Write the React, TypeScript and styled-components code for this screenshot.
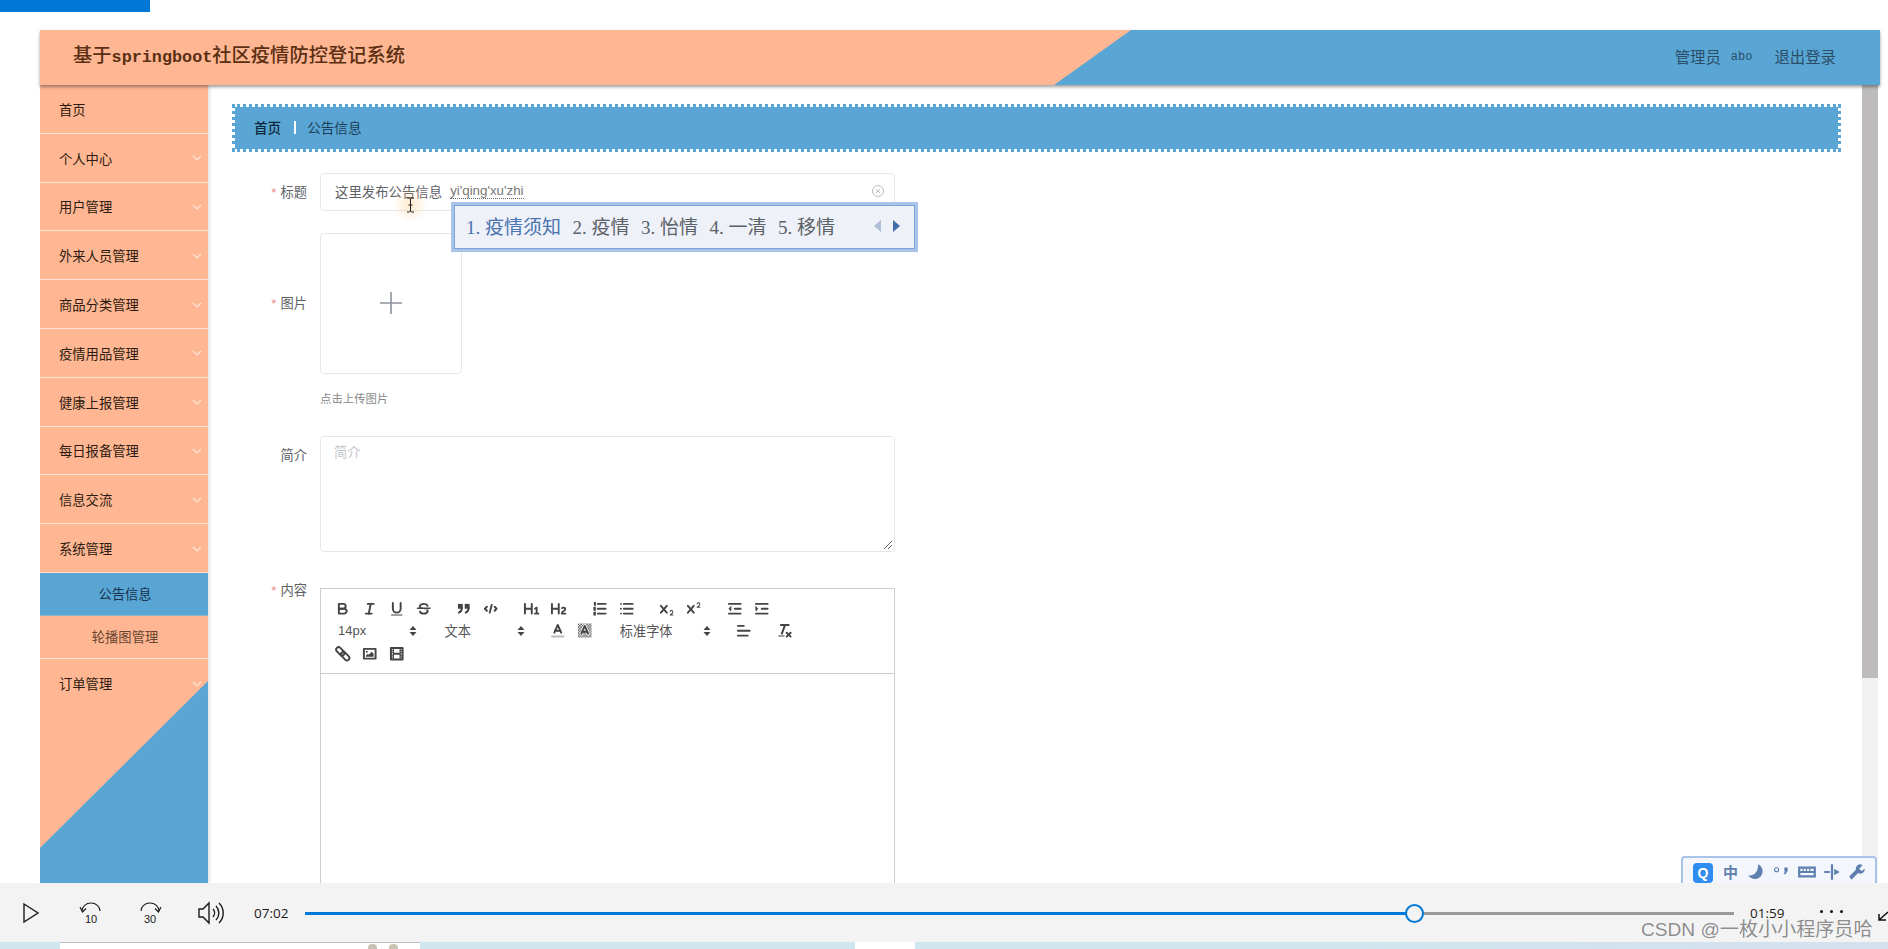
import React from "react";
import styled, { createGlobalStyle } from "styled-components";

const SANS = `"Noto Sans CJK SC", "Liberation Sans", sans-serif`;
const PEACH = "#ffb693";
const BLUE = "#59a6d5";

const Global = createGlobalStyle`
  html, body { margin: 0; padding: 0; background: #fff; overflow: hidden; }
  body { font-family: ${SANS}; }
  * { box-sizing: border-box; }
`;

const Screen = styled.div`
  width: 1888px; height: 949px; display: flex; flex-direction: column; overflow: hidden; background: #fff;
`;
const Viewport = styled.div`
  position: relative; height: 883px; overflow: hidden; flex: none;
`;
const TopStrip = styled.div`
  width: 150px; height: 12px; background: #0078d7;
`;
const Frame = styled.div`
  margin: 18px 0 0 40px; width: 1840px; height: 853px; display: flex; flex-direction: column;
`;
const Header = styled.header`
  position: relative; z-index: 2; flex: none; height: 55px; background: ${BLUE};
  box-shadow: 0 2px 3px rgba(40,40,40,.45);
  display: flex; align-items: center; justify-content: space-between; padding: 0 44px 3px 33px;
  &::before {
    content: ""; position: absolute; inset: 0; background: ${PEACH};
    clip-path: polygon(0 0, 1091px 0, 1014px 100%, 0 100%);
  }
`;
const Title = styled.h1`
  position: relative; margin: 0; font-size: 19.3px; font-weight: 500; color: #5b2f12; line-height: 52px; white-space: nowrap;
`;
const TitleLatin = styled.span`
  font-family: "Liberation Mono", monospace; font-size: 16.8px; font-weight: 700;
`;
const UserBox = styled.div`
  position: relative; display: flex; align-items: center; color: #2b4e68; font-size: 15.4px; line-height: 20px;
`;
const UserName = styled.span`
  font-family: "Liberation Mono", monospace; font-size: 12px; margin: 2px 22px 0 10px;
`;
const Body = styled.div`
  flex: 1; display: flex; min-height: 0;
`;
const Side = styled.nav`
  position: relative; flex: none; width: 168px; background: ${BLUE}; box-shadow: 2px 0 3px rgba(0,0,0,.1);
  &::before {
    content: ""; position: absolute; inset: 0; background: ${PEACH};
    clip-path: polygon(0 0, 100% 0, 100% 596px, 0 763px);
  }
`;
const MenuItem = styled.div<{ $last?: boolean }>`
  position: relative; height: 48.8px; padding: 1px 0 0 19px; display: flex; align-items: center; justify-content: space-between;
  font-size: 13.3px; color: #2e1c10;
  border-bottom: ${p => (p.$last ? "none" : "1.5px solid #ffe3d4")};
`;
const Chevron = styled.svg`
  width: 10px; height: 6px; margin-right: 6px; fill: none; stroke: #ffe7da; stroke-width: 1.2;
`;
const SubItem = styled.div<{ $active?: boolean }>`
  position: relative; height: 43px; padding-left: 2px; display: flex; align-items: center; justify-content: center; font-size: 13.3px;
  background: ${p => (p.$active ? BLUE : PEACH)};
  color: ${p => (p.$active ? "#16324d" : "#6a4630")};
  border-bottom: ${p => (p.$active ? "1px solid #8fb3c9" : "1.5px solid #ffe3d4")};
`;
const Main = styled.main`
  flex: 1; min-width: 0; display: flex;
`;
const Content = styled.div`
  flex: 1; min-width: 0; padding: 19px 21px 0 24px;
`;
const ScrollTrack = styled.div`
  flex: none; width: 16px; margin-right: 2px; background: #f1f1f1;
`;
const ScrollThumb = styled.div`
  height: 593px; background: #bdbbbb;
`;
const Crumbs = styled.div`
  height: 48px; border: 3px dotted ${BLUE}; background: ${BLUE}; background-clip: padding-box;
  display: flex; align-items: center; padding: 0 0 2px 19px; font-size: 13.6px; margin-bottom: 21px;
`;
const CrumbHome = styled.span`
  color: #10283c; font-weight: 500;
`;
const CrumbSep = styled.span`
  width: 2px; height: 13px; background: #fff; margin: 0 11px 0 13px;
`;
const CrumbNow = styled.span`
  color: #1d3d57;
`;
const FormRow = styled.div<{ $gap: number; $center?: boolean }>`
  display: flex; align-items: ${p => (p.$center ? "center" : "flex-start")}; margin-bottom: ${p => p.$gap}px;
`;
const Label = styled.label<{ $tight?: boolean }>`
  flex: none; width: 75px; margin-right: 13px; text-align: right; font-size: 13.3px; color: #606266;
  line-height: ${p => (p.$tight ? "20px" : "38px")};
  margin-top: ${p => (p.$tight ? "-8px" : "0")};
`;
const Star = styled.span`
  color: #f08a8a; font-family: "Liberation Sans", sans-serif; margin-right: 4px;
`;
const InputBox = styled.div`
  width: 575px; height: 38px; border: 1px solid #e4e7ed; border-radius: 4px; display: flex; align-items: center; padding: 0 9px 2px 14px;
  font-size: 13.4px; color: #606266;
`;
const Composition = styled.span`
  margin-left: 8px; font-family: "Liberation Sans", sans-serif; font-size: 13.3px; color: #777;
  border-bottom: 1px dotted #666; line-height: 15px;
`;
const ClearIcon = styled.svg`
  width: 14px; height: 14px; margin-left: auto; fill: none; stroke: #b9bcc2; stroke-width: 1;
`;
const Upload = styled.div`
  width: 142px; height: 141px; border: 1px solid #e4e7ed; border-radius: 4px; display: flex; align-items: center; justify-content: center; padding-bottom: 2px;
`;
const PlusIcon = styled.svg`
  width: 24px; height: 24px; stroke: #8c939d; stroke-width: 1.6; fill: none;
`;
const Tip = styled.div`
  margin: 16px 0 30px 88px; height: 16px; line-height: 16px; font-size: 11.4px; color: #888;
`;
const TextArea = styled.div`
  position: relative; width: 575px; height: 116px; border: 1px solid #e4e7ed; border-radius: 4px; padding: 5px 13px;
  font-size: 13.3px; color: #c4c6cc; line-height: 20px;
`;
const Resizer = styled.svg`
  position: absolute; right: 1px; bottom: 1px; width: 10px; height: 10px; stroke: #666; stroke-width: 1; fill: none;
`;
const Editor = styled.div`
  width: 575px; border: 1px solid #ccc;
`;
const Toolbar = styled.div`
  padding: 8px 8px 8px; border-bottom: 1px solid #ccc;
`;
const ToolRow = styled.div`
  display: flex; height: 22.5px; align-items: center;
`;
const Group = styled.div`
  display: flex; align-items: center; margin-right: 13.6px;
`;
const Btn = styled.span`
  width: 27px; height: 22.5px; display: flex; align-items: center; justify-content: center;
`;
const Ico = styled.svg`
  width: 17.5px; height: 17.5px; fill: none; stroke: #444; stroke-width: 2; stroke-linecap: round; stroke-linejoin: round;
  .f { fill: #444; stroke: none; }
`;
const Picker = styled.span<{ $w: number; $latin?: boolean }>`
  width: ${p => p.$w}px; margin-right: 13.6px; height: 22.5px; display: flex; align-items: center; justify-content: space-between;
  padding: 0 5px 0 ${p => (p.$latin ? 9 : 8)}px; color: #555; line-height: 1; font-size: ${p => (p.$latin ? 13 : 13.2)}px;
  font-family: ${p => (p.$latin ? `"Liberation Sans", sans-serif` : SANS)};
`;
const PickerArrows = styled.svg`
  width: 10px; height: 12px; fill: #444;
`;
const EditArea = styled.div`
  height: 300px;
`;
const Candidates = styled.div`
  position: absolute; left: 451px; top: 202px; width: 467px; height: 50px; background: #eef1f8;
  border: 4px solid #a9c4e8; outline: 1px solid #7ea3d6; outline-offset: -4px;
  display: flex; align-items: center; padding: 0 0 3px 11px; font-family: "Liberation Serif", "Noto Sans CJK SC", serif;
  font-size: 19px; color: #5b6168;
`;
const Candidate = styled.span<{ $on?: boolean }>`
  margin-right: 11.5px; color: ${p => (p.$on ? "#4a73b0" : "#5b6168")};
`;
const PageArrows = styled.svg`
  position: absolute; right: 13px; top: 12px; width: 28px; height: 16px;
`;
const Pointer = styled.div`
  position: absolute; left: 392px; top: 187px; width: 36px; height: 36px; border-radius: 50%;
  background: radial-gradient(circle, rgba(255,200,130,.4), rgba(255,220,170,0) 70%);
  display: flex; align-items: center; justify-content: center;
`;
const PointerIcon = styled.svg`
  width: 9px; height: 16px; stroke: #222; stroke-width: 1; fill: none;
`;
const ImeBar = styled.div`
  position: absolute; left: 1681px; top: 856px; width: 196px; height: 40px; background: #f3f6fc;
  border: 2px solid #a9c4e8; border-radius: 4px 4px 0 0; display: flex; align-items: flex-start; padding: 4px 0 0 10px; gap: 4px;
  color: #5f80ae;
`;
const ImeLogo = styled.span`
  width: 20px; height: 20px; margin-top: 1px; border-radius: 4px; background: #2f8df0; color: #fff; font: 700 14px/20px "Liberation Sans", sans-serif; text-align: center; margin-right: 3px;
`;
const ImeCell = styled.span`
  width: 21px; height: 20px; font-size: 15px; line-height: 20px; font-weight: 700; text-align: center; margin-right: 0.4px; display: flex; align-items: center; justify-content: center;
`;
const ImeIcon = styled.svg`
  flex: none; width: 20px; height: 18px; fill: #5f80ae;
`;
const Player = styled.div`
  position: relative; flex: none; height: 59px; background: #f3f3f3; display: flex; align-items: center; padding-left: 22px;
`;
const PlayIcon = styled.svg`
  width: 18px; height: 22px; fill: none; stroke: #1a1a1a; stroke-width: 1.4; margin-right: 39px;
`;
const SkipIcon = styled.svg`
  width: 24px; height: 28px; margin-right: 35px; fill: none; stroke: #1a1a1a; stroke-width: 1.1;
  text { font: 11px "Liberation Sans", sans-serif; fill: #1a1a1a; stroke: none; text-anchor: middle; }
`;
const SpeakerIcon = styled.svg`
  width: 28px; height: 26px; margin-right: 29px; fill: none; stroke: #1a1a1a; stroke-width: 1.4;
`;
const Time = styled.span`
  flex: none; width: 51px; font: 13.5px "Open Sans", "Liberation Sans", sans-serif; color: #1a1a1a;
`;
const Track = styled.div`
  position: relative; flex: none; width: 1429px; height: 3px; margin-top: 2px; background: #9a9a9a;
`;
const Played = styled.div`
  height: 3px; background: #0078d7;
`;
const Thumb = styled.span`
  position: absolute; top: -8px; width: 19px; height: 19px; margin-left: -9.5px; border-radius: 50%; background: #f3f3f3; border: 2.5px solid #0078d7;
`;
const EndTime = styled(Time)`
  width: 60px; margin-left: 16px;
`;
const More = styled.span`
  flex: none; margin-left: 10px; display: flex; gap: 7px; margin-top: -3px;
`;
const Dot = styled.i`
  width: 3px; height: 3px; border-radius: 50%; background: #111;
`;
const Corner = styled.svg`
  position: absolute; right: 0; top: 26px; width: 10px; height: 12px; stroke: #111; stroke-width: 1.5; fill: none;
`;
const Watermark = styled.div`
  position: absolute; left: 1641px; top: 36px; font-size: 19.1px; line-height: 22px; color: rgba(110,110,110,.8); white-space: nowrap;
  font-family: "Liberation Sans", "Noto Sans CJK SC", sans-serif; text-shadow: 0 0 1px #fff;
`;
const Desktop = styled.div`
  flex: none; height: 7px; background: linear-gradient(90deg, #cfe6ef 0, #cfe6ef 70%, #d5e0ee 100%); display: flex;
`;
const DeskWindow = styled.div<{ $left: number; $width: number }>`
  margin-left: ${p => p.$left}px; width: ${p => p.$width}px; background: #fff; border-top: ${p => (p.$left < 100 ? "1px solid #bbb" : "none")};
  display: flex; justify-content: flex-end; gap: 12px; padding-right: 22px;
`;
const DeskIcon = styled.i`
  width: 9px; height: 5px; margin-top: 1px; border-radius: 4px 4px 0 0; background: #c8c4b4;
`;

const Chev = () => (
  <Chevron viewBox="0 0 10 6"><polyline points="1,1 5,5 9,1" /></Chevron>
);

const menu = ["个人中心", "用户管理", "外来人员管理", "商品分类管理", "疫情用品管理", "健康上报管理", "每日报备管理", "信息交流", "系统管理"];

const I: Record<string, React.ReactNode> = {
  bold: <><path d="M5,4H9.5A2.5,2.5,0,0,1,12,6.5v0A2.5,2.5,0,0,1,9.5,9H5V4Z" /><path d="M5,9h5.5A2.5,2.5,0,0,1,13,11.5v0A2.5,2.5,0,0,1,10.5,14H5V9Z" /></>,
  italic: <><line x1="7" x2="13" y1="4" y2="4" /><line x1="5" x2="11" y1="14" y2="14" /><line x1="8" x2="10" y1="14" y2="4" /></>,
  underline: <><path d="M5,3V9a4,4,0,0,0,4,4H9a4,4,0,0,0,4-4V3" /><rect className="f" x="3" y="15" width="12" height="1" rx=".5" /></>,
  strike: <><line x1="15.5" x2="2.5" y1="8.5" y2="8.5" strokeWidth="1.4" /><path className="f" d="M9.007,8C6.542,7.791,6,7.519,6,6.5,6,5.792,7.283,5,9,5c1.571,0,2.765.679,2.969,1.309a1,1,0,0,0,1.9-.617C13.356,4.106,11.354,3,9,3,6.2,3,4,4.538,4,6.5a3.2,3.2,0,0,0,.5,1.843Z" /><path className="f" d="M8.984,10C11.457,10.208,12,10.479,12,11.5c0,.708-1.283,1.5-3,1.5-1.571,0-2.765-.679-2.969-1.309a1,1,0,1,0-1.9.617C4.644,13.894,6.646,15,9,15c2.8,0,5-1.538,5-3.5a3.2,3.2,0,0,0-.5-1.843Z" /></>,
  quote: <><rect className="f" x="3" y="4" width="5" height="5" /><rect className="f" x="10" y="4" width="5" height="5" /><path d="M7,8c0,4-3,5-3,5" /><path d="M14,8c0,4-3,5-3,5" /></>,
  code: <><polyline points="5 7 3 9 5 11" /><polyline points="13 7 15 9 13 11" /><line x1="10" x2="8" y1="5" y2="13" /></>,
  h1: <path className="f" d="M10,4V14a1,1,0,0,1-2,0V10H3v4a1,1,0,0,1-2,0V4A1,1,0,0,1,3,4V8H8V4a1,1,0,0,1,2,0Zm6.06787,9.209H14.98975V7.59863a.54085.54085,0,0,0-.605-.60547h-.62744a1.01119,1.01119,0,0,0-.748.29688L11.645,8.56641a.5435.5435,0,0,0-.022.8584l.28613.30762a.53861.53861,0,0,0,.84717.0332l.09912-.08789a1.2137,1.2137,0,0,0,.2417-.35254h.02246s-.01123.30859-.01123.60547V13.209H12.041a.54085.54085,0,0,0-.605.60547v.43945a.54085.54085,0,0,0,.605.60547h4.02686a.54085.54085,0,0,0,.605-.60547v-.43945A.54085.54085,0,0,0,16.06787,13.209Z" />,
  h2: <path className="f" d="M16.73975,13.81445v.43945a.54085.54085,0,0,1-.605.60547H11.855a.58392.58392,0,0,1-.64893-.60547V14.0127c0-2.90527,3.39941-3.42187,3.39941-4.55469a.77675.77675,0,0,0-.84717-.78125,1.17684,1.17684,0,0,0-.83594.38477c-.2749.26367-.561.374-.85791.13184l-.4292-.34082c-.30811-.24219-.38525-.51758-.1543-.81445a2.97155,2.97155,0,0,1,2.45361-1.17676,2.45393,2.45393,0,0,1,2.68408,2.40918c0,2.45312-3.1792,2.92676-3.27832,3.93848h2.79443A.54085.54085,0,0,1,16.73975,13.81445ZM9,3A.99974.99974,0,0,0,8,4V8H3V4A1,1,0,0,0,1,4V14a1,1,0,0,0,2,0V10H8v4a1,1,0,0,0,2,0V4A.99974.99974,0,0,0,9,3Z" />,
  ol: <><line x1="7" x2="15" y1="4" y2="4" /><line x1="7" x2="15" y1="9" y2="9" /><line x1="7" x2="15" y1="14" y2="14" /><rect className="f" x="3" y="2" width="2" height="4" /><rect className="f" x="2.5" y="7" width="2.5" height="4" /><rect className="f" x="2.5" y="12" width="2.5" height="4" /></>,
  ul: <><line x1="6" x2="15" y1="4" y2="4" /><line x1="6" x2="15" y1="9" y2="9" /><line x1="6" x2="15" y1="14" y2="14" /><line x1="3" x2="3" y1="4" y2="4" /><line x1="3" x2="3" y1="9" y2="9" /><line x1="3" x2="3" y1="14" y2="14" /></>,
  sub: <><path className="f" d="M15.5,15H13.861a3.858,3.858,0,0,0,1.914-2.975,1.8,1.8,0,0,0-1.6-1.751A1.921,1.921,0,0,0,12.021,11.7a.50013.50013,0,1,0,.957.291h0a.914.914,0,0,1,1.053-.725.81.81,0,0,1,.744.762c0,1.076-1.16971,1.86982-1.93971,2.43082A1.45639,1.45639,0,0,0,12,15.5a.5.5,0,0,0,.5.5h3A.5.5,0,0,0,15.5,15Z" /><path className="f" d="M9.65,5.241a1,1,0,0,0-1.409.108L6,7.964,3.759,5.349A1,1,0,0,0,2.241,6.651L4.684,9.5,2.241,12.35A1,1,0,0,0,3.75,13.667L6,11.036,8.241,13.65a1,1,0,1,0,1.518-1.3L7.316,9.5,9.759,6.651A1,1,0,0,0,9.65,5.241Z" /></>,
  sup: <><path className="f" d="M15.5,7H13.861a4.015,4.015,0,0,0,1.914-2.975,1.8,1.8,0,0,0-1.6-1.751A1.922,1.922,0,0,0,12.021,3.7a.5.5,0,1,0,.957.291.917.917,0,0,1,1.053-.725.81.81,0,0,1,.744.762c0,1.077-1.164,1.925-1.934,2.486A1.423,1.423,0,0,0,12,7.5a.5.5,0,0,0,.5.5h3A.5.5,0,0,0,15.5,7Z" /><path className="f" d="M9.651,5.241a1,1,0,0,0-1.41.108L6,7.964,3.759,5.349a1,1,0,1,0-1.519,1.3L4.683,9.5,2.241,12.35a1,1,0,1,0,1.519,1.3L6,11.036,8.241,13.65a1,1,0,0,0,1.519-1.3L7.317,9.5,9.759,6.651A1,1,0,0,0,9.651,5.241Z" /></>,
  outdent: <><line x1="3" x2="15" y1="14" y2="14" /><line x1="3" x2="15" y1="4" y2="4" /><line x1="9" x2="15" y1="9" y2="9" /><polyline className="f" points="5 7 5 11 3 9 5 7" /><polyline points="5 7 5 11 3 9 5 7" strokeWidth="1" /></>,
  indent: <><line x1="3" x2="15" y1="14" y2="14" /><line x1="3" x2="15" y1="4" y2="4" /><line x1="9" x2="15" y1="9" y2="9" /><polyline className="f" points="3 7 3 11 5 9 3 7" /><polyline points="3 7 3 11 5 9 3 7" strokeWidth="1" /></>,
  color: <><line x1="3" x2="15" y1="15" y2="15" stroke="#bbb" /><polyline points="5.5 11 9 3 12.5 11" /><line x1="11.63" x2="6.38" y1="9" y2="9" /></>,
  bg: <><defs><pattern id="chk" width="3" height="3" patternUnits="userSpaceOnUse"><rect className="f" width="1.5" height="1.5" /><rect className="f" x="1.5" y="1.5" width="1.5" height="1.5" /></pattern></defs><rect x="2" y="1.5" width="14" height="14.5" fill="url(#chk)" stroke="none" /><polyline points="5.5 12 9 4 12.5 12" stroke="#fff" strokeWidth="3.4" /><polyline points="5.5 12 9 4 12.5 12" /><line x1="11.63" x2="6.38" y1="10" y2="10" /></>,
  align: <><line x1="3" x2="15" y1="9" y2="9" /><line x1="3" x2="13" y1="14" y2="14" /><line x1="3" x2="9" y1="4" y2="4" /></>,
  clean: <><line x1="5" x2="13" y1="3" y2="3" /><line x1="6" x2="9.35" y1="12" y2="3" /><line x1="11" x2="15" y1="11" y2="15" /><line x1="15" x2="11" y1="11" y2="15" /><rect className="f" x="2" y="14" width="7" height="1" rx=".5" /></>,
  link: <><rect x="1.5" y="4" width="10" height="5" rx="2.5" transform="rotate(45 6.5 6.5)" /><rect x="6.5" y="9" width="10" height="5" rx="2.5" transform="rotate(45 11.5 11.5)" /></>,
  image: <><rect x="3" y="4" width="12" height="10" /><circle className="f" cx="6" cy="7" r="1" /><polyline className="f" points="5 12 5 11 7 9 8 10 11 7 13 9 13 12 5 12" /></>,
  video: <><rect x="3" y="3" width="12" height="12" /><rect className="f" x="5" y="3" width="1" height="12" /><rect className="f" x="12" y="3" width="1" height="12" /><rect className="f" x="5" y="8" width="8" height="2" /><rect className="f" x="3" y="5" width="3" height="1" /><rect className="f" x="3" y="7" width="3" height="1" /><rect className="f" x="3" y="10" width="3" height="1" /><rect className="f" x="3" y="12" width="3" height="1" /><rect className="f" x="12" y="5" width="3" height="1" /><rect className="f" x="12" y="7" width="3" height="1" /><rect className="f" x="12" y="10" width="3" height="1" /><rect className="f" x="12" y="12" width="3" height="1" /></>,
};

const Tools = ({ names }: { names: string[] }) => (
  <Group>
    {names.map(n => (
      <Btn key={n}><Ico viewBox="0 0 18 18">{I[n]}</Ico></Btn>
    ))}
  </Group>
);

const Select = ({ text, w, latin }: { text: string; w: number; latin?: boolean }) => (
  <Picker $w={w} $latin={latin}>
    {text}
    <PickerArrows viewBox="0 0 10 12"><polygon points="5,1 8.5,5 1.5,5" /><polygon points="5,11 8.5,7 1.5,7" /></PickerArrows>
  </Picker>
);

export default function App() {
  return (
    <>
      <Global />
      <Screen>
        <Viewport>
          <TopStrip />
          <Frame>
            <Header>
              <Title>基于<TitleLatin>springboot</TitleLatin>社区疫情防控登记系统</Title>
              <UserBox>
                管理员<UserName>abo</UserName>退出登录
              </UserBox>
            </Header>
            <Body>
              <Side>
                <MenuItem>首页</MenuItem>
                {menu.map(m => (
                  <MenuItem key={m}>{m}<Chev /></MenuItem>
                ))}
                <SubItem $active>公告信息</SubItem>
                <SubItem>轮播图管理</SubItem>
                <MenuItem $last>订单管理<Chev /></MenuItem>
              </Side>
              <Main>
                <Content>
                  <Crumbs>
                    <CrumbHome>首页</CrumbHome>
                    <CrumbSep />
                    <CrumbNow>公告信息</CrumbNow>
                  </Crumbs>
                  <FormRow $gap={21}>
                    <Label><Star>*</Star>标题</Label>
                    <InputBox>
                      这里发布公告信息
                      <Composition>yi'qing'xu'zhi</Composition>
                      <ClearIcon viewBox="0 0 14 14"><circle cx="7" cy="7" r="5.5" /><path d="M5 5l4 4M9 5l-4 4" /></ClearIcon>
                    </InputBox>
                  </FormRow>
                  <FormRow $gap={0} $center>
                    <Label><Star>*</Star>图片</Label>
                    <Upload>
                      <PlusIcon viewBox="0 0 24 24"><path d="M12 1v22M1 12h22" /></PlusIcon>
                    </Upload>
                  </FormRow>
                  <Tip>点击上传图片</Tip>
                  <FormRow $gap={36}>
                    <Label>简介</Label>
                    <TextArea>
                      简介
                      <Resizer viewBox="0 0 10 10"><path d="M1 9L9 1M5 9l4-4" /></Resizer>
                    </TextArea>
                  </FormRow>
                  <FormRow $gap={0}>
                    <Label $tight><Star>*</Star>内容</Label>
                    <Editor>
                      <Toolbar>
                        <ToolRow>
                          <Tools names={["bold", "italic", "underline", "strike"]} />
                          <Tools names={["quote", "code"]} />
                          <Tools names={["h1", "h2"]} />
                          <Tools names={["ol", "ul"]} />
                          <Tools names={["sub", "sup"]} />
                          <Tools names={["outdent", "indent"]} />
                        </ToolRow>
                        <ToolRow>
                          <Select text="14px" w={94} latin />
                          <Select text="文本" w={94} />
                          <Tools names={["color", "bg"]} />
                          <Select text="标准字体" w={105} />
                          <Tools names={["align"]} />
                          <Tools names={["clean"]} />
                        </ToolRow>
                        <ToolRow>
                          <Tools names={["link", "image", "video"]} />
                        </ToolRow>
                      </Toolbar>
                      <EditArea />
                    </Editor>
                  </FormRow>
                </Content>
                <ScrollTrack><ScrollThumb /></ScrollTrack>
              </Main>
            </Body>
          </Frame>
          <Pointer>
            <PointerIcon viewBox="0 0 9 16"><path d="M1 1h2.5L4.5 2l1-1H8M4.5 2v12M1 15h2.5l1-1 1 1H8M2.5 8h4" /></PointerIcon>
          </Pointer>
          <Candidates>
            <Candidate $on>1. 疫情须知</Candidate>
            <Candidate>2. 疫情</Candidate>
            <Candidate>3. 怡情</Candidate>
            <Candidate>4. 一清</Candidate>
            <Candidate>5. 移情</Candidate>
            <PageArrows viewBox="0 0 28 16">
              <polygon points="8,2 8,14 1,8" fill="#aebcd4" />
              <polygon points="20,2 20,14 27,8" fill="#3f6ea8" />
            </PageArrows>
          </Candidates>
          <ImeBar>
            <ImeLogo>Q</ImeLogo>
            <ImeCell>中</ImeCell>
            <ImeCell><ImeIcon viewBox="0 0 18 16"><path d="M11 1a7 7 0 1 1-9 10c5 1 9-3 9-10z" /></ImeIcon></ImeCell>
            <ImeCell><ImeIcon viewBox="0 0 18 16"><circle cx="5" cy="6" r="1.8" fill="none" stroke="#5f80ae" /><path d="M12 4h3v3l-2 3h-1.5l1-3H12z" /></ImeIcon></ImeCell>
            <ImeCell><ImeIcon viewBox="0 0 18 16"><path fillRule="evenodd" d="M1 3h16v10H1zM3 5v2h2V5zm3 0v2h2V5zm3 0v2h2V5zm3 0v2h3V5zM3 9v2h12V9z" /></ImeIcon></ImeCell>
            <ImeCell><ImeIcon viewBox="0 0 18 16"><path d="M8 1h2v14H8zM2 7h5v2H2zM11 5l5 3-5 3z" /></ImeIcon></ImeCell>
            <ImeCell><ImeIcon viewBox="0 0 18 16"><path d="M12 1a4 4 0 0 0-4 5L2 12l2 3 6-6a4 4 0 0 0 6-4l-3 2-2-2 3-3a4 4 0 0 0-2-1z" /></ImeIcon></ImeCell>
          </ImeBar>
        </Viewport>
        <Player>
          <PlayIcon viewBox="0 0 18 22"><polygon points="2,2 16,11 2,20" /></PlayIcon>
          <SkipIcon viewBox="0 0 24 28">
            <path d="M3 12a9 8 0 0 1 18 0" />
            <path d="M1 8l2.5 5L7 9.5" />
            <text x="12" y="24">10</text>
          </SkipIcon>
          <SkipIcon viewBox="0 0 24 28">
            <path d="M3 12a9 8 0 0 1 18 0" />
            <path d="M23 8l-2.5 5L17 9.5" />
            <text x="12" y="24">30</text>
          </SkipIcon>
          <SpeakerIcon viewBox="0 0 28 26">
            <path d="M2 9h4l6-6v20l-6-6H2z" />
            <path d="M16 9a6 6 0 0 1 0 8" />
            <path d="M19 6a10 10 0 0 1 0 14" />
            <path d="M22 3a14 14 0 0 1 0 20" />
          </SpeakerIcon>
          <Time>07:02</Time>
          <Track>
            <Played style={{ width: `${(1109 / 1429) * 100}%` }} />
            <Thumb style={{ left: `${(1109 / 1429) * 100}%` }} />
          </Track>
          <EndTime>01:59</EndTime>
          <More><Dot /><Dot /><Dot /></More>
          <Corner viewBox="0 0 10 12"><path d="M10 3L1 11M1 5v6h7" /></Corner>
          <Watermark>CSDN @一枚小小程序员哈</Watermark>
        </Player>
        <Desktop>
          <DeskWindow $left={60} $width={360}><DeskIcon /><DeskIcon /></DeskWindow>
          <DeskWindow $left={435} $width={60} />
        </Desktop>
      </Screen>
    </>
  );
}
